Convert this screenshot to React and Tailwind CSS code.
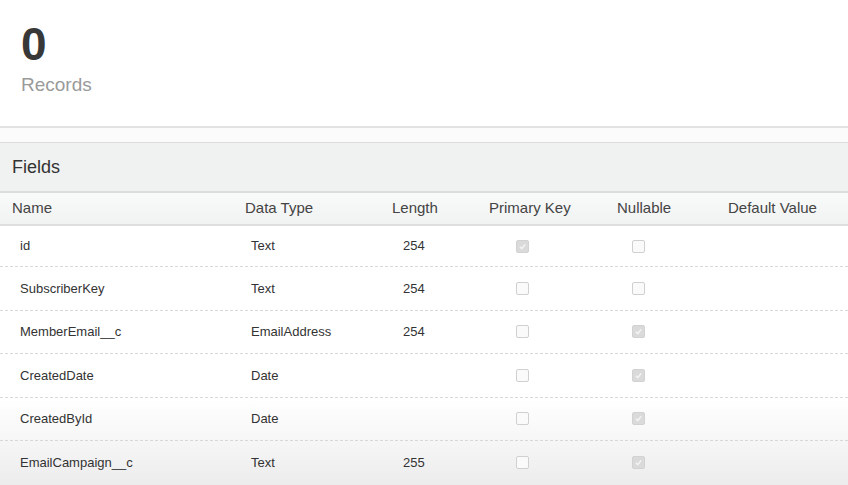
const rows = [
  { name: "id", type: "Text", length: "254", pk: true, nullable: false },
  { name: "SubscriberKey", type: "Text", length: "254", pk: false, nullable: false },
  { name: "MemberEmail__c", type: "EmailAddress", length: "254", pk: false, nullable: true },
  { name: "CreatedDate", type: "Date", length: "", pk: false, nullable: true },
  { name: "CreatedById", type: "Date", length: "", pk: false, nullable: true },
  { name: "EmailCampaign__c", type: "Text", length: "255", pk: false, nullable: true },
];

const cols = "grid grid-cols-[233px_147px_97px_128px_111px_1fr]";

const Box = ({ checked }) =>
  checked ? (
    <span className="flex h-[13px] w-[13px] items-center justify-center rounded-[2px] border border-[#d2d2d2] bg-[#dadada]">
      <svg viewBox="0 0 10 10" className="h-[9px] w-[9px]">
        <path d="M2 5.2 L4.2 7.3 L8 2.6" fill="none" stroke="#f4f4f4" strokeWidth="1.6" />
      </svg>
    </span>
  ) : (
    <span className="block h-[13px] w-[13px] rounded-[2px] border border-[#d0d0d0] bg-[#fafafa]" />
  );

const Row = ({ r, first, last }) => (
  <div
    className={`${cols} ${first ? "h-[41px]" : "h-[43.5px]"} items-center text-[13px] text-[#333] ${
      last ? "" : "border-b border-dashed border-[#d8d8d8]"
    }`}
  >
    <div className="pl-5">{r.name}</div>
    <div className="pl-[18px]">{r.type}</div>
    <div className="pl-[23px]">{r.length}</div>
    <div className="pl-[39px]">
      <Box checked={r.pk} />
    </div>
    <div className="pl-[27px]">
      <Box checked={r.nullable} />
    </div>
    <div />
  </div>
);

export default function App() {
  return (
    <div
      className="h-[485px] w-[848px] overflow-hidden bg-white"
      style={{ fontFamily: '"Liberation Sans", Arial, sans-serif' }}
    >
      {/* Record count */}
      <div className="h-[128px] border-b-2 border-[#e2e2e2] pl-[21px] pt-[18px]">
        <div className="text-[46px] font-bold leading-[52px] text-[#383838]">0</div>
        <div className="mt-[3px] text-[19px] leading-[24px] text-[#9a9a9a]">Records</div>
      </div>

      <div className="h-[14px] bg-[#fbfbfb]" />

      {/* Fields panel */}
      <div className="border-t border-[#dcdcdc]">
        <div className="flex h-[50px] items-center border-b-2 border-[#dcdcdc] bg-[#f0f1f1] pl-3 text-[18px] text-[#333]">
          Fields
        </div>
        <div
          className={`${cols} h-[33px] items-center border-b-2 border-[#dedede] bg-gradient-to-b from-[#f9fafa] to-[#f1f2f2] text-[15px] text-[#444]`}
        >
          <div className="pl-3">Name</div>
          <div className="pl-3">Data Type</div>
          <div className="pl-3">Length</div>
          <div className="pl-3">Primary Key</div>
          <div className="pl-3">Nullable</div>
          <div className="pl-3">Default Value</div>
        </div>
        {rows.slice(0, 4).map((r, i) => (
          <Row key={r.name} r={r} first={i === 0} />
        ))}
        <div className="bg-gradient-to-b from-white via-[#f6f6f6] to-[#ececec]">
          {rows.slice(4).map((r, i) => (
            <Row key={r.name} r={r} last={i === 1} />
          ))}
        </div>
      </div>
    </div>
  );
}
